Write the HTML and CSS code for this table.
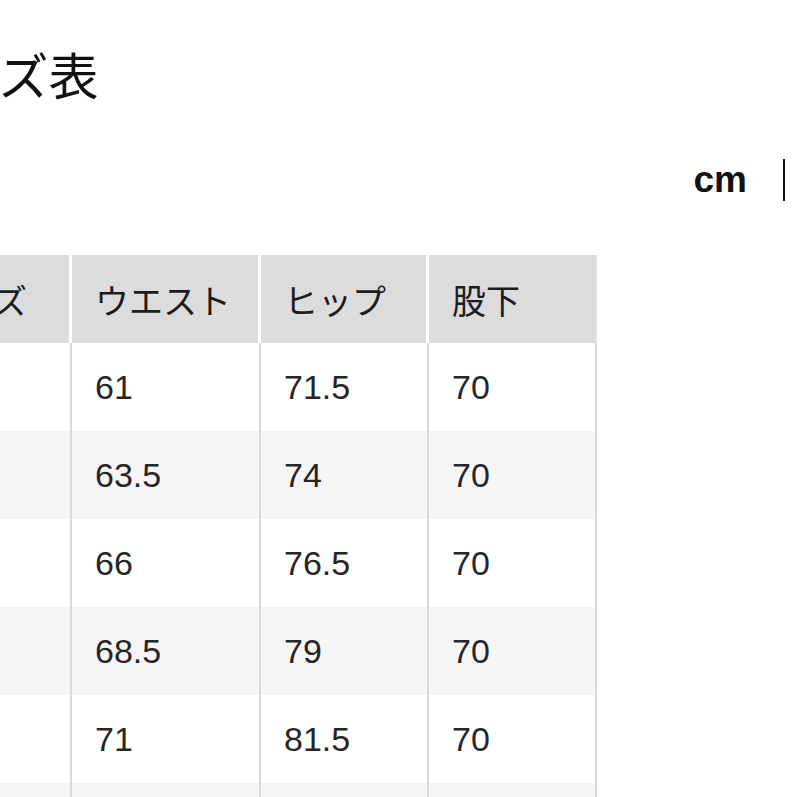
FILE: index.html
```html
<!DOCTYPE html>
<html lang="ja">
<head>
<meta charset="utf-8">
<title>サイズ表</title>
<link rel="stylesheet" href="styles.css">
</head>
<body>
<div class="page">
  <h1 class="title">サイズ表</h1>
  <div class="units">
    <span class="unit-active">cm</span>
    <span class="unit-sep"></span>
  </div>
  <table class="size-table">
    <colgroup>
      <col class="c1"><col class="c2"><col class="c3"><col class="c4">
    </colgroup>
    <thead>
      <tr><th>サイズ</th><th>ウエスト</th><th>ヒップ</th><th>股下</th></tr>
    </thead>
    <tbody>
      <tr><td>XS</td><td>61</td><td>71.5</td><td>70</td></tr>
      <tr><td>S</td><td>63.5</td><td>74</td><td>70</td></tr>
      <tr><td>M</td><td>66</td><td>76.5</td><td>70</td></tr>
      <tr><td>L</td><td>68.5</td><td>79</td><td>70</td></tr>
      <tr><td>XL</td><td>71</td><td>81.5</td><td>70</td></tr>
      <tr><td>XXL</td><td>73.5</td><td>84</td><td>70</td></tr>
    </tbody>
  </table>
</div>
</body>
</html>
```
FILE: styles.css
```css
html, body {
  margin: 0;
  padding: 0;
  background: #ffffff;
}
.page {
  width: 797px;
  height: 797px;
  overflow: hidden;
  font-family: "Liberation Sans", "Noto Sans CJK JP", sans-serif;
  color: #262626;
}
.title {
  margin: 0 0 0 -100px;
  padding-top: 43px;
  font-family: "Noto Sans CJK JP", sans-serif;
  font-weight: 400;
  font-size: 50px;
  line-height: 60px;
  color: #111;
}
.units {
  margin-top: 47px;
  height: 60px;
  display: flex;
  align-items: center;
  justify-content: flex-end;
  padding-right: 12px;
}
.unit-active {
  font-size: 37px;
  font-weight: 700;
  line-height: 42px;
  color: #111;
  margin-right: 36px;
}
.unit-sep {
  width: 2px;
  height: 42px;
  background: #111;
}
.size-table {
  margin-top: 45px;
  margin-left: -97px;
  border-collapse: separate;
  border-spacing: 0;
  table-layout: fixed;
  width: 694px;
}
.c1 { width: 169px; }
.c2 { width: 189px; }
.c3 { width: 168px; }
.c4 { width: 168px; }
.size-table th,
.size-table td {
  box-sizing: border-box;
  height: 88px;
  padding: 0 0 0 23px;
  text-align: left;
  vertical-align: middle;
  font-size: 34px;
  font-weight: 400;
  white-space: nowrap;
}
.size-table th {
  background: #dcdcdc;
  border-right: 3px solid #ffffff;
  font-family: "Noto Sans CJK JP", sans-serif;
  color: #1c1c1c;
}
.size-table th:last-child {
  border-right: 1px solid #e8e8e8;
}
.size-table td {
  border-right: 2px solid #dadada;
}
.size-table tbody tr:nth-child(even) td {
  background: #f5f5f5;
}
```
